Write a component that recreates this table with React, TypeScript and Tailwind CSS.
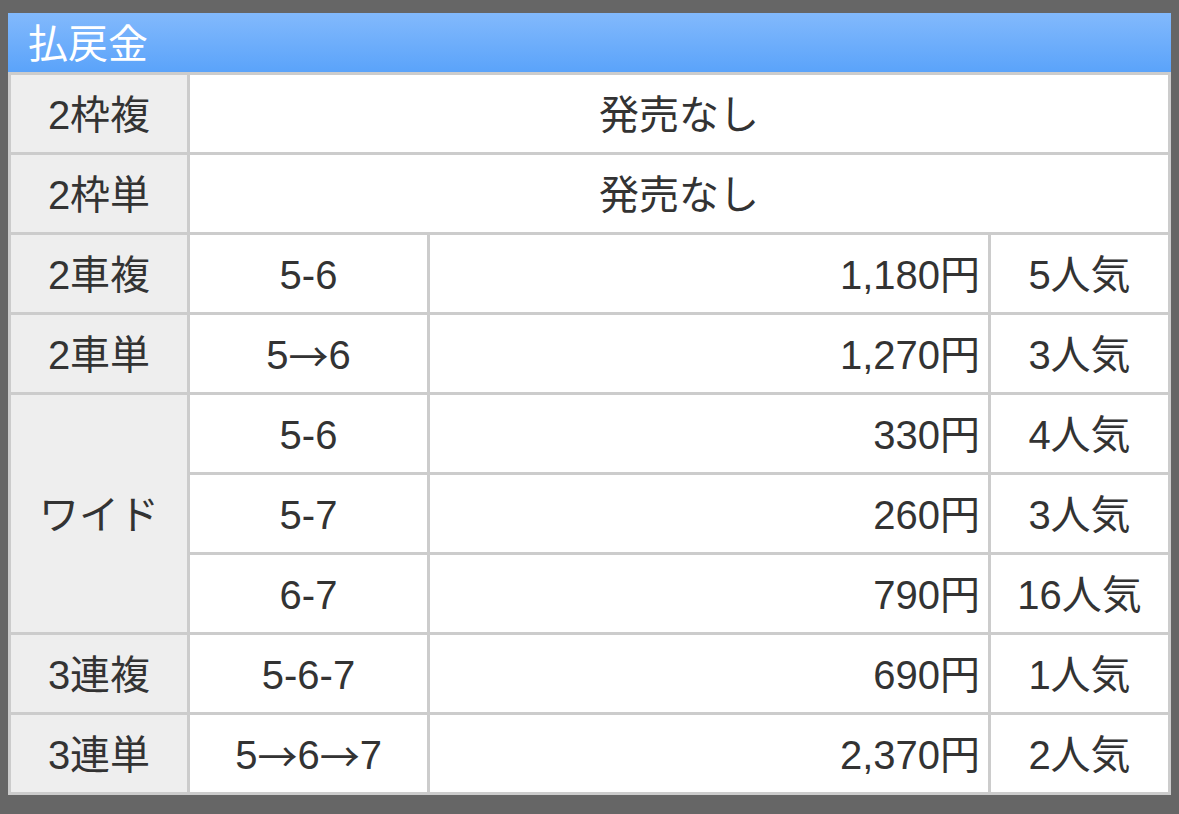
import React from "react";

const font = { fontFamily: '"Liberation Sans", "Noto Sans CJK JP", sans-serif' };

type Row = { label: string; combo?: React.ReactNode; amount?: string; pop?: string };

const Arrow = () => <span style={{ fontFamily: '"Noto Sans CJK JP", sans-serif' }} className="text-[40px]">→</span>;

const Label = ({ children, span = 1 }: { children: React.ReactNode; span?: number }) => (
  <div
    className={`bg-[#eeeeee] flex items-center justify-center pt-[2px] text-[40px] text-[#333] ${span === 3 ? "row-span-3" : ""}`}
  >
    {children}
  </div>
);

const Cell = ({ children, cls = "" }: { children?: React.ReactNode; cls?: string }) => (
  <div className={`bg-white flex items-center pt-[2px] text-[40px] text-[#333] ${cls}`}>{children}</div>
);

export default function App() {
  const Simple = (r: Row) => (
    <React.Fragment key={r.label}>
      <Label>{r.label}</Label>
      <Cell cls="justify-center">{r.combo}</Cell>
      <Cell cls="justify-end pr-[8px]">{r.amount}</Cell>
      <Cell cls="justify-center">{r.pop}</Cell>
    </React.Fragment>
  );
  return (
    <div className="w-[1179px] h-[814px] bg-[#666666] pt-[13px] pl-[8px]" style={font}>
      <div className="w-[1163px]">
        <div className="h-[59px] bg-gradient-to-b from-[#82b9fc] to-[#5aa3fa] flex items-center pl-[20px] pt-[2px] text-white text-[40px] leading-none">
          払戻金
        </div>
        <div className="grid grid-cols-[176px_237px_558px_177px] auto-rows-[77px] gap-[3px] p-[3px] bg-[#cccccc] leading-none">
          <Label>2枠複</Label>
          <Cell cls="col-span-3 justify-center">発売なし</Cell>
          <Label>2枠単</Label>
          <Cell cls="col-span-3 justify-center">発売なし</Cell>
          {Simple({ label: "2車複", combo: "5-6", amount: "1,180円", pop: "5人気" })}
          {Simple({ label: "2車単", combo: <>5<Arrow />6</>, amount: "1,270円", pop: "3人気" })}
          <Label span={3}>ワイド</Label>
          <Cell cls="justify-center">5-6</Cell>
          <Cell cls="justify-end pr-[8px]">330円</Cell>
          <Cell cls="justify-center">4人気</Cell>
          <Cell cls="justify-center">5-7</Cell>
          <Cell cls="justify-end pr-[8px]">260円</Cell>
          <Cell cls="justify-center">3人気</Cell>
          <Cell cls="justify-center">6-7</Cell>
          <Cell cls="justify-end pr-[8px]">790円</Cell>
          <Cell cls="justify-center">16人気</Cell>
          {Simple({ label: "3連複", combo: "5-6-7", amount: "690円", pop: "1人気" })}
          {Simple({ label: "3連単", combo: <>5<Arrow />6<Arrow />7</>, amount: "2,370円", pop: "2人気" })}
        </div>
      </div>
    </div>
  );
}
